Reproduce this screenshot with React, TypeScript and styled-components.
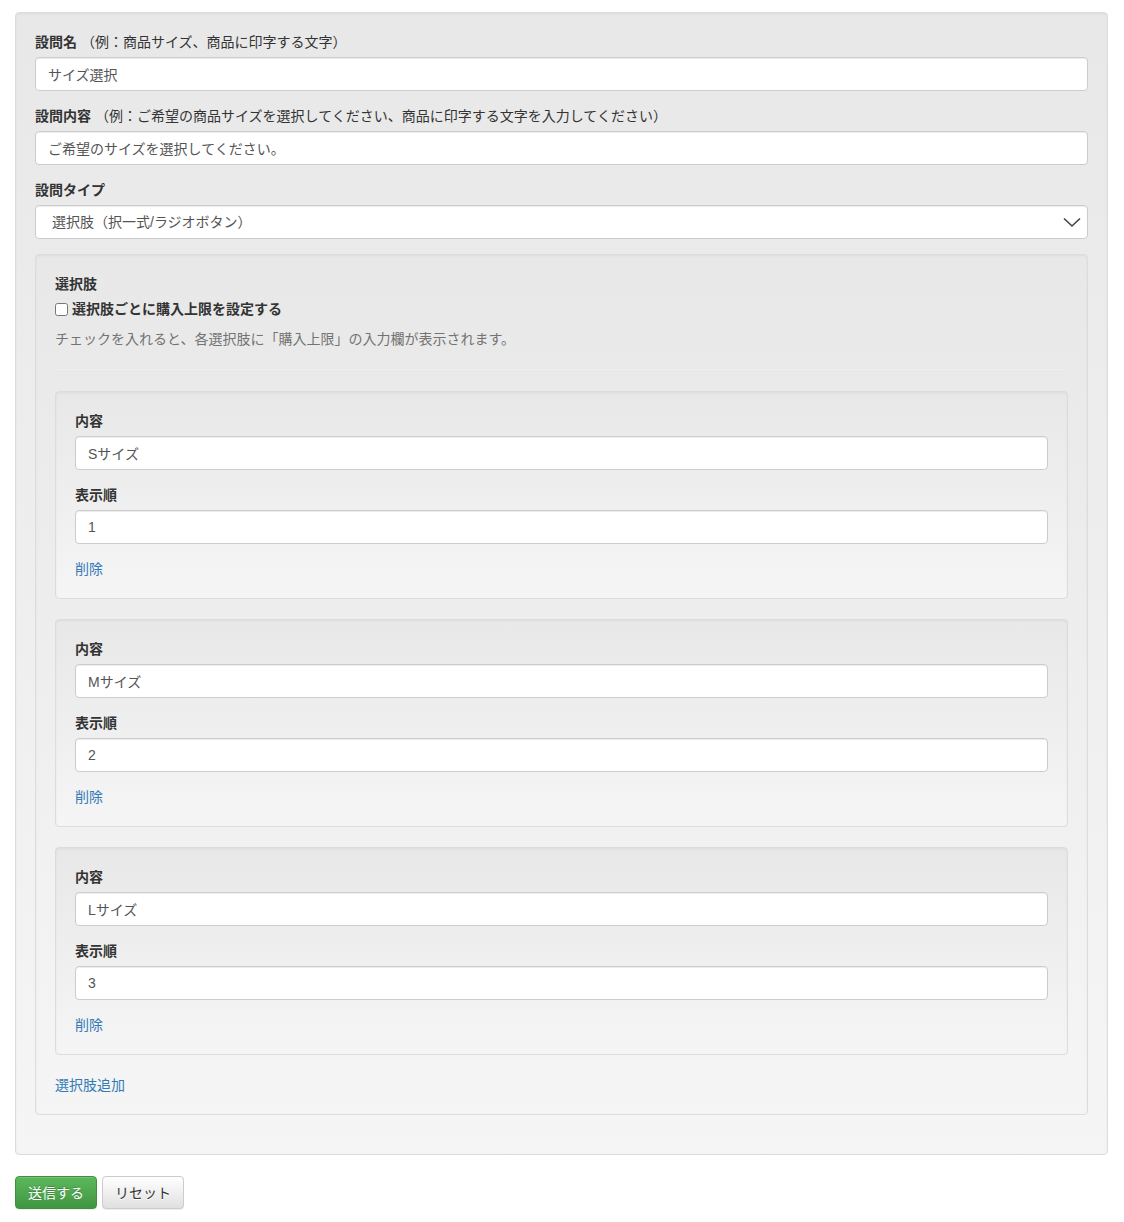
import React from 'react';
import styled, { createGlobalStyle } from 'styled-components';

const GlobalStyle = createGlobalStyle`
  html, body {
    margin: 0;
    padding: 0;
    background: #fff;
  }
  body {
    font-family: "Liberation Sans", "Noto Sans CJK JP", sans-serif;
    font-size: 14px;
    line-height: 20px;
    color: #333;
  }
  * {
    box-sizing: border-box;
  }
`;

const Page = styled.div`
  padding: 12px 16px 12px 15px;
`;

const Well = styled.div`
  padding: 19px;
  margin-bottom: 20px;
  border: 1px solid #dcdcdc;
  border-radius: 4px;
  background-image: linear-gradient(to bottom, #e8e8e8 0%, #f5f5f5 100%);
  box-shadow: inset 0 1px 3px rgba(0, 0, 0, 0.05), 0 1px 0 rgba(255, 255, 255, 0.1);
`;

const FormGroup = styled.div`
  margin-bottom: 15px;
`;

const Label = styled.label`
  display: block;
  margin-bottom: 5px;
  font-weight: 700;
`;

const Hint = styled.span`
  font-weight: 400;
  margin-left: 4px;
`;

const Input = styled.input`
  display: block;
  width: 100%;
  height: 34px;
  padding: 6px 12px;
  font: inherit;
  color: #555;
  background: #fff;
  border: 1px solid #ccc;
  border-radius: 4px;
  box-shadow: inset 0 1px 1px rgba(0, 0, 0, 0.075);
  outline: none;
`;

const SelectBox = styled.div`
  position: relative;
  height: 34px;
  padding: 6px 16px;
  color: #555;
  background: #fff;
  border: 1px solid #ccc;
  border-radius: 4px;
  box-shadow: inset 0 1px 1px rgba(0, 0, 0, 0.075);
`;

const Chevron = styled.svg`
  position: absolute;
  right: 5px;
  top: 8px;
`;

const CheckRow = styled.label`
  display: flex;
  align-items: center;
  font-weight: 700;
  margin: 1px 0 0;
  input {
    width: 13px;
    height: 13px;
    margin: 0 4px 0 0;
  }
`;

const HelpText = styled.p`
  margin: 10px 0 0;
  color: #737373;
`;

const Rule = styled.hr`
  margin: 20px 0 21px;
  border: 0;
  border-top: 1px solid #eee;
`;

const Link = styled.a`
  display: inline-block;
  color: #337ab7;
  text-decoration: none;
  cursor: pointer;
`;

const Actions = styled.div`
  display: flex;
  gap: 5px;
  padding-top: 1px;
`;

const Button = styled.button<{ $primary?: boolean }>`
  height: 33px;
  padding: 6px 12px;
  font: inherit;
  border-radius: 4px;
  cursor: pointer;
  color: ${(p) => (p.$primary ? '#fff' : '#333')};
  border: 1px solid ${(p) => (p.$primary ? '#3e8f3e' : '#ccc')};
  text-shadow: ${(p) => (p.$primary ? '0 -1px 0 rgba(0,0,0,.2)' : '0 1px 0 #fff')};
  background-image: ${(p) =>
    p.$primary
      ? 'linear-gradient(to bottom, #5cb85c 0%, #419641 100%)'
      : 'linear-gradient(to bottom, #fff 0%, #e0e0e0 100%)'};
  box-shadow: inset 0 1px 0 rgba(255, 255, 255, 0.15), 0 1px 1px rgba(0, 0, 0, 0.075);
`;

const choices = [
  { name: 'Sサイズ', order: '1' },
  { name: 'Mサイズ', order: '2' },
  { name: 'Lサイズ', order: '3' },
];

function ChoiceItem({ name, order }: { name: string; order: string }) {
  return (
    <Well>
      <FormGroup>
        <Label>内容</Label>
        <Input type="text" defaultValue={name} />
      </FormGroup>
      <FormGroup>
        <Label>表示順</Label>
        <Input type="text" defaultValue={order} />
      </FormGroup>
      <Link>削除</Link>
    </Well>
  );
}

export default function App() {
  return (
    <Page>
      <GlobalStyle />
      <Well>
        <FormGroup>
          <Label>
            設問名<Hint>（例：商品サイズ、商品に印字する文字）</Hint>
          </Label>
          <Input type="text" defaultValue="サイズ選択" />
        </FormGroup>
        <FormGroup>
          <Label>
            設問内容
            <Hint>（例：ご希望の商品サイズを選択してください、商品に印字する文字を入力してください）</Hint>
          </Label>
          <Input type="text" defaultValue="ご希望のサイズを選択してください。" />
        </FormGroup>
        <FormGroup>
          <Label>設問タイプ</Label>
          <SelectBox>
            選択肢（択一式/ラジオボタン）
            <Chevron width="20" height="16" viewBox="0 0 20 16">
              <path d="M2 4.5 L10 12 L18 4.5" fill="none" stroke="#444" strokeWidth="1.6" />
            </Chevron>
          </SelectBox>
        </FormGroup>
        <Well>
          <Label>選択肢</Label>
          <CheckRow>
            <input type="checkbox" />
            選択肢ごとに購入上限を設定する
          </CheckRow>
          <HelpText>チェックを入れると、各選択肢に「購入上限」の入力欄が表示されます。</HelpText>
          <Rule />
          {choices.map((c) => (
            <ChoiceItem key={c.order} name={c.name} order={c.order} />
          ))}
          <Link>選択肢追加</Link>
        </Well>
      </Well>
      <Actions>
        <Button $primary type="button">
          送信する
        </Button>
        <Button type="button">リセット</Button>
      </Actions>
    </Page>
  );
}
